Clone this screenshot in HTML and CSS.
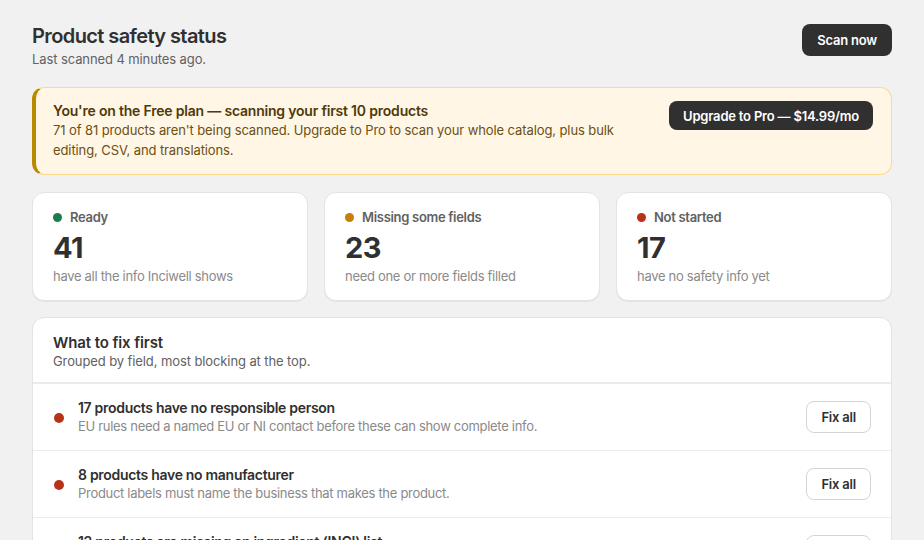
FILE: index.html
```html
<!DOCTYPE html>
<html lang="en">
<head>
    <meta charset="UTF-8">
    <meta name="viewport" content="width=device-width, initial-scale=1.0">
    <title>Product safety status</title>
    <link rel="stylesheet" href="styles.css">
</head>
<body>
    <div class="page">
        <div class="page-header">
            <div>
                <h1>Product safety status</h1>
                <p class="subtitle">Last scanned 4 minutes ago.</p>
            </div>
            <button class="btn btn-primary">Scan now</button>
        </div>

        <div class="banner">
            <div class="banner-text">
                <div class="banner-title">You're on the Free plan — scanning your first 10 products</div>
                <p>71 of 81 products aren't being scanned. Upgrade to Pro to scan your whole catalog, plus bulk editing, CSV, and translations.</p>
            </div>
            <button class="btn btn-primary btn-small">Upgrade to Pro — $14.99/mo</button>
        </div>

        <div class="stats">
            <div class="stat-card">
                <div class="stat-label"><span class="dot dot-green"></span>Ready</div>
                <div class="stat-number">41</div>
                <div class="stat-caption">have all the info Inciwell shows</div>
            </div>
            <div class="stat-card">
                <div class="stat-label"><span class="dot dot-orange"></span>Missing some fields</div>
                <div class="stat-number">23</div>
                <div class="stat-caption">need one or more fields filled</div>
            </div>
            <div class="stat-card">
                <div class="stat-label"><span class="dot dot-red"></span>Not started</div>
                <div class="stat-number">17</div>
                <div class="stat-caption">have no safety info yet</div>
            </div>
        </div>

        <div class="card">
            <div class="card-header">
                <h2>What to fix first</h2>
                <p class="subtitle">Grouped by field, most blocking at the top.</p>
            </div>
            <div class="fix-row">
                <span class="dot dot-red"></span>
                <div class="fix-info">
                    <div class="fix-title">17 products have no responsible person</div>
                    <div class="fix-desc">EU rules need a named EU or NI contact before these can show complete info.</div>
                </div>
                <button class="btn btn-secondary">Fix all</button>
            </div>
            <div class="fix-row">
                <span class="dot dot-red"></span>
                <div class="fix-info">
                    <div class="fix-title">8 products have no manufacturer</div>
                    <div class="fix-desc">Product labels must name the business that makes the product.</div>
                </div>
                <button class="btn btn-secondary">Fix all</button>
            </div>
            <div class="fix-row">
                <span class="dot dot-orange"></span>
                <div class="fix-info">
                    <div class="fix-title">12 products are missing an ingredient (INCI) list</div>
                    <div class="fix-desc">Cosmetics need a full ingredient list in INCI order.</div>
                </div>
                <button class="btn btn-secondary">Fix all</button>
            </div>
        </div>
    </div>
</body>
</html>
```

FILE: styles.css
```css
body {
    font-family: Inter, "Noto Sans", sans-serif;
    margin: 0;
    padding: 0;
    background-color: #f1f1f1;
    color: #303030;
    font-size: 13px;
    line-height: 20px;
    letter-spacing: -0.3px;
}
.page {
    padding: 24px 32px;
}
.page-header {
    display: flex;
    justify-content: space-between;
    align-items: flex-start;
    margin-bottom: 18px;
}
h1 {
    font-size: 20px;
    line-height: 24px;
    font-weight: 600;
    letter-spacing: -0.6px;
    margin: 0 0 1px;
    color: #303030;
}
h2 {
    font-size: 15px;
    line-height: 18px;
    font-weight: 600;
    letter-spacing: -0.1px;
    margin: 0;
    color: #303030;
}
.subtitle {
    margin: 0;
    color: #616161;
    letter-spacing: -0.1px;
}
p {
    margin: 0;
}
.btn {
    font-family: inherit;
    font-size: 13px;
    font-weight: 600;
    letter-spacing: -0.2px;
    border-radius: 8px;
    cursor: pointer;
    line-height: 20px;
    white-space: nowrap;
}
.btn-primary {
    background-color: #303030;
    color: #ffffff;
    border: none;
    padding: 6px 15px;
    height: 32px;
}
.btn-small {
    height: 29px;
    padding: 4px 14px;
}
.btn-secondary {
    background-color: #ffffff;
    color: #303030;
    border: 1px solid #d4d4d4;
    padding: 5px 14px;
    height: 32px;
    flex-shrink: 0;
}
.banner {
    display: flex;
    justify-content: space-between;
    align-items: flex-start;
    gap: 24px;
    background-color: #fff6e6;
    border: 1px solid #fcd98d;
    border-left: 4px solid #b98900;
    border-radius: 12px;
    padding: 13px 18px 14px 17px;
    margin-bottom: 17px;
}
.banner-text {
    max-width: 575px;
    color: #6b5012;
}
.banner-title {
    font-size: 14px;
    font-weight: 600;
    letter-spacing: -0.2px;
    color: #4f3a08;
}
.banner-text p {
    line-height: 19.5px;
    letter-spacing: -0.1px;
}
.stats {
    display: grid;
    grid-template-columns: repeat(3, 1fr);
    gap: 16px;
    margin-bottom: 16px;
}
.stat-card,
.card {
    background-color: #ffffff;
    border: 1px solid #e3e3e3;
    border-radius: 12px;
    box-shadow: 0 1px 0 rgba(0, 0, 0, 0.05);
}
.stat-card {
    padding: 14px 20px 14px;
}
.stat-label {
    display: flex;
    align-items: center;
    gap: 8px;
    font-weight: 600;
    color: #616161;
}
.stat-number {
    font-size: 29px;
    line-height: 34px;
    font-weight: 700;
    letter-spacing: -0.5px;
    color: #303030;
    margin-top: 4px;
}
.stat-caption {
    color: #8a8a8a;
    margin-top: 1px;
}
.dot {
    display: inline-block;
    width: 9px;
    height: 9px;
    border-radius: 50%;
    flex-shrink: 0;
}
.dot-green {
    background-color: #1c7c4c;
}
.dot-orange {
    background-color: #c87f0a;
}
.dot-red {
    background-color: #b8321a;
}
.card {
    overflow: hidden;
}
.card-header {
    padding: 16px 20px 12px;
    border-bottom: 2px solid #ebebeb;
}
.card-header .subtitle {
    line-height: 18px;
}
.fix-row {
    display: flex;
    align-items: center;
    gap: 14px;
    padding: 14px 20px 14px;
    border-bottom: 1px solid #ebebeb;
}
.fix-row .dot {
    width: 10px;
    height: 10px;
    margin-left: 1px;
    margin-top: 1px;
}
.fix-info {
    flex-grow: 1;
}
.fix-title {
    font-size: 14px;
    line-height: 19px;
    font-weight: 600;
    color: #303030;
}
.fix-desc {
    line-height: 19px;
    color: #8a8a8a;
}
```
